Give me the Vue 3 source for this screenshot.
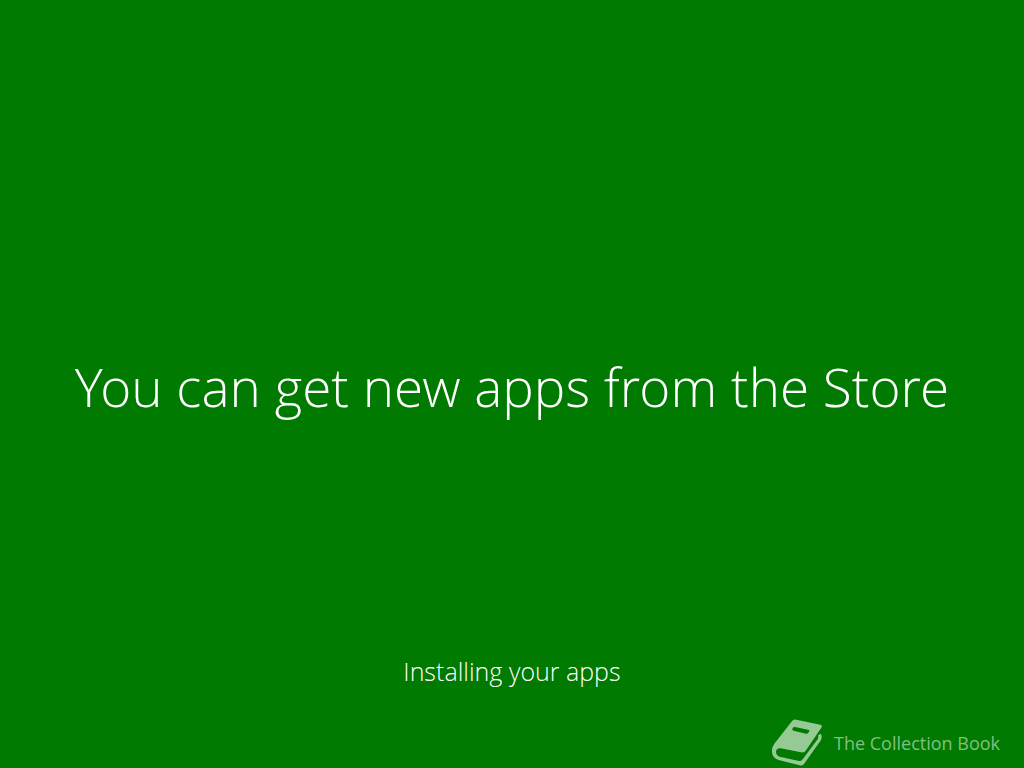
<script setup>
const headline = 'You can get new apps from the Store'
const status = 'Installing your apps'
const brand = 'The Collection Book'
</script>

<template>
  <main class="screen">
    <h1 class="headline">{{ headline }}</h1>
    <p class="status" role="status">{{ status }}</p>
    <footer class="brand">
      <svg class="book" viewBox="30 28 150 141" aria-hidden="true">
        <path
          fill="currentColor"
          fill-rule="evenodd"
          d="M103 30 L175 45 Q182 47 178 54 L131 123 Q127 130 117 128 L56 116 Q43 115 42 126 Q42 137 53 141 L111 154 Q117 155 121 150 L167 89 Q170 83 168 77 L177 72 Q181 82 177 91 L126 163 Q121 169 113 167 L50 151 Q31 145 30 127 Q29 113 37 102 L88 37 Q94 28 103 30 Z M99 52 Q94 51 92 56 L91 58 Q90 62 95 63 L132 72 Q137 73 139 69 L142 65 Q144 61 138 60 Z"
        />
      </svg>
      <span class="brand-name">{{ brand }}</span>
    </footer>
  </main>
</template>

<style>
body {
  background: #007a00;
}
</style>

<style scoped>
.screen {
  box-sizing: border-box;
  min-height: 100vh;
  display: grid;
  grid-template-rows: 1fr auto auto;
  padding: 118px 24px 0;
  background: #007a00;
  color: #fff;
  font-family: "Open Sans Light", "Open Sans", "Noto Sans", sans-serif;
  font-weight: 300;
}

.headline {
  align-self: center;
  margin: 0;
  font-size: 53px;
  font-weight: 300;
  line-height: 70px;
  text-align: center;
}

.status {
  margin: 0;
  font-size: 25px;
  line-height: 32px;
  text-align: center;
}

.brand {
  display: flex;
  justify-content: flex-end;
  align-items: center;
  gap: 12px;
  margin-top: 32px;
  padding-bottom: 2px;
  color: #95ca95;
}

.book {
  width: 50px;
  height: 47px;
}

.brand-name {
  font-family: "Open Sans", "Noto Sans", sans-serif;
  font-size: 18px;
  font-weight: 400;
  line-height: 24px;
  color: #80c080;
}
</style>
